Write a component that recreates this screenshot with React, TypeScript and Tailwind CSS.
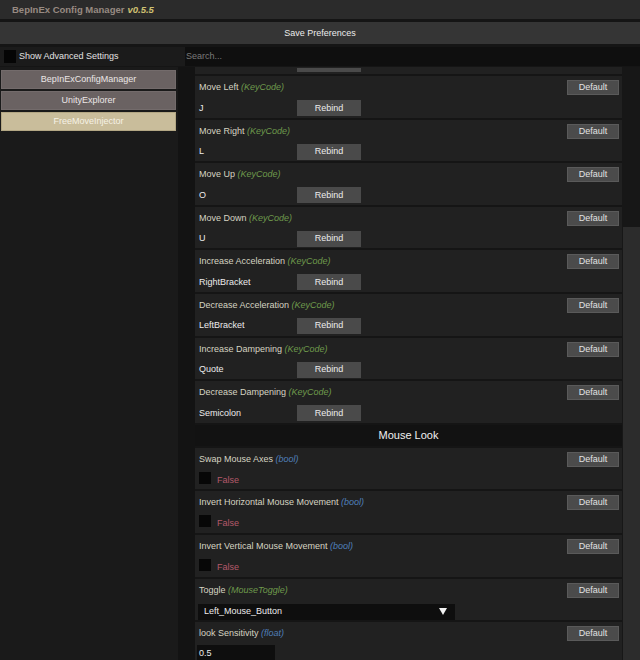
import React from "react";

type Entry =
  | { kind: "key"; label: string; type: string; value: string }
  | { kind: "bool"; label: string; type: string }
  | { kind: "enum"; label: string; type: string; value: string }
  | { kind: "float"; label: string; type: string; value: string };

const keys: Entry[] = [
  { kind: "key", label: "Move Left", type: "KeyCode", value: "J" },
  { kind: "key", label: "Move Right", type: "KeyCode", value: "L" },
  { kind: "key", label: "Move Up", type: "KeyCode", value: "O" },
  { kind: "key", label: "Move Down", type: "KeyCode", value: "U" },
  { kind: "key", label: "Increase Acceleration", type: "KeyCode", value: "RightBracket" },
  { kind: "key", label: "Decrease Acceleration", type: "KeyCode", value: "LeftBracket" },
  { kind: "key", label: "Increase Dampening", type: "KeyCode", value: "Quote" },
  { kind: "key", label: "Decrease Dampening", type: "KeyCode", value: "Semicolon" },
];

const mouse: Entry[] = [
  { kind: "bool", label: "Swap Mouse Axes", type: "bool" },
  { kind: "bool", label: "Invert Horizontal Mouse Movement", type: "bool" },
  { kind: "bool", label: "Invert Vertical Mouse Movement", type: "bool" },
  { kind: "enum", label: "Toggle", type: "MouseToggle", value: "Left_Mouse_Button" },
  { kind: "float", label: "look Sensitivity", type: "float", value: "0.5" },
];

function TypeTag({ type }: { type: string }) {
  const blue = type === "bool" || type === "float";
  return (
    <span className={blue ? "italic text-[#4f7fb8]" : "italic text-[#6e9a4c]"}>({type})</span>
  );
}

function Card({ e }: { e: Entry }) {
  return (
    <div className="h-[41.6px] shrink-0 bg-[#212121] pl-[4px] pr-[3px] pt-[4px] flex flex-col">
      <div className="h-[15px] flex items-center justify-between">
        <span className="text-[#d6d4c2]">
          {e.label} <TypeTag type={e.type} />
        </span>
        <div className="w-[52px] h-[15px] bg-[#4b4b4b] border border-[#5a5a5a] flex items-center justify-center text-[#e2e2e2]">
          Default
        </div>
      </div>
      {e.kind === "key" && (
        <div className="mt-[5px] h-[16px] flex items-center">
          <span className="w-[98px] text-[#ececec]">{e.value}</span>
          <div className="w-[64px] h-[16px] bg-[#4a4a4a] flex items-center justify-center text-[#ececec]">
            Rebind
          </div>
        </div>
      )}
      {e.kind === "bool" && (
        <div className="mt-[5px] h-[16px] flex items-start">
          <div className="w-[12px] h-[12px] bg-[#070707]" />
          <span className="ml-[6px] mt-[2px] leading-[12px] text-[#b4596a]">False</span>
        </div>
      )}
      {e.kind === "enum" && (
        <div className="mt-[6px] ml-[-1px] w-[257px] h-[16px] bg-[#0e0e0e] flex items-center justify-between pl-[6px] pr-[8px] text-[#ececec]">
          <span>{e.value}</span>
          <svg width="8" height="7" viewBox="0 0 8 7">
            <polygon points="0,0 8,0 4,7" fill="#f2f2f2" />
          </svg>
        </div>
      )}
      {e.kind === "float" && (
        <div className="mt-[4px] ml-[-2px] w-[78px] h-[16px] bg-[#0e0e0e] flex items-center pl-[2px] text-[#ececec]">
          {e.value}
        </div>
      )}
    </div>
  );
}

export default function App() {
  return (
    <div className="w-[640px] h-[660px] bg-[#151515] flex flex-col overflow-hidden font-['Liberation_Sans',Arial,sans-serif] text-[9px] leading-none">
      <div className="h-[19px] shrink-0 bg-[#2b2b2b] flex items-center pl-[12px] text-[9.5px] font-bold">
        <span className="text-[#978a82]">BepInEx Config Manager</span>
        <span className="ml-[3px] italic text-[#cfc172]">v0.5.5</span>
      </div>
      <div className="h-[22px] shrink-0 mt-[3px] bg-[#353535] flex items-center justify-center text-[#ececec]">
        Save Preferences
      </div>
      <div className="h-[19px] shrink-0 mt-[3px] flex bg-[#1b1b1b]">
        <div className="w-[185px] flex items-center">
          <div className="ml-[4px] w-[12px] h-[13px] bg-[#050505]" />
          <span className="ml-[3px] text-[#e2e2e2]">Show Advanced Settings</span>
        </div>
        <div className="flex-1 bg-[#0f0f0f] flex items-center pl-[1px] text-[#7a7a7a]">Search...</div>
      </div>
      <div className="flex-1 flex min-h-0 mt-[1px]">
        <div className="w-[178px] shrink-0 bg-[#1a1a1a] flex flex-col gap-[2px] pt-[3px] pl-[1px] pr-[2px]">
          <div className="h-[19px] bg-[#6a6262] border border-[#736b6b] flex items-center justify-center text-[#ebe6e6]">
            BepInExConfigManager
          </div>
          <div className="h-[19px] bg-[#6a6262] border border-[#736b6b] flex items-center justify-center text-[#ebe6e6]">
            UnityExplorer
          </div>
          <div className="h-[19px] bg-[#c9bd9b] border border-[#b3a784] flex items-center justify-center text-[#f6f2e6]">
            FreeMoveInjector
          </div>
        </div>
        <div className="w-[17px] shrink-0 bg-[#131313]" />
        <div className="w-[427px] shrink-0 flex flex-col gap-[2px] overflow-hidden bg-[#151515]">
          <div className="h-[7px] shrink-0 bg-[#212121] flex items-start">
            <div className="ml-[102px] mt-[1px] w-[64px] h-[4px] bg-[#4a4a4a]" />
          </div>
          {keys.map((e) => (
            <Card key={e.label} e={e} />
          ))}
          <div className="h-[21px] shrink-0 bg-[#121212] flex items-center justify-center text-[11px] text-[#f0f0f0]">
            Mouse Look
          </div>
          {mouse.map((e) => (
            <Card key={e.label} e={e} />
          ))}
        </div>
        <div className="flex-1 flex flex-col bg-[#171717] pl-[1px]">
          <div className="h-[160px] shrink-0" />
          <div className="flex-1 bg-[#2c2c2c]" />
        </div>
      </div>
    </div>
  );
}
